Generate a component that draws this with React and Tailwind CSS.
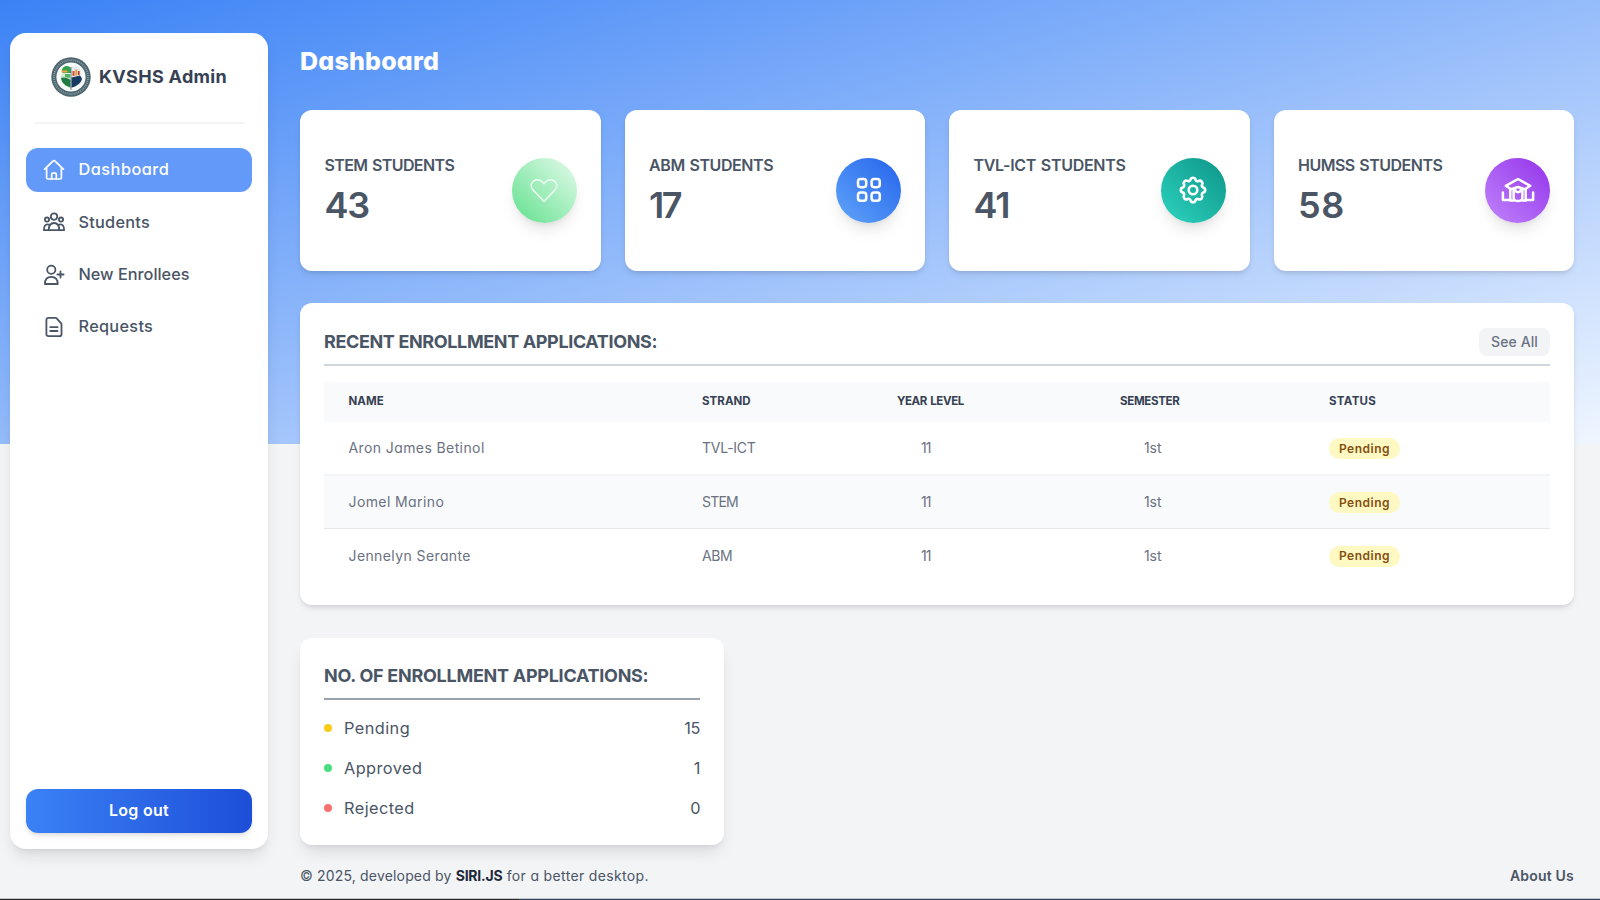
import React from "react";

function HomeIcon() {
  return (
    <svg width="22" height="22" viewBox="0 0 22 22" fill="none" stroke="currentColor" strokeWidth="1.7" strokeLinejoin="round" strokeLinecap="round">
      <path d="M1.6 10.2 10.2 1.9a1.1 1.1 0 0 1 1.6 0l8.6 8.3" />
      <path d="M3.6 8.8v9.9c0 .8.5 1.3 1.3 1.3h12.2c.8 0 1.3-.5 1.3-1.3V8.8" />
      <path d="M8.7 19.8v-4.6c0-.6.4-1 1-1h2.6c.6 0 1 .4 1 1v4.6" />
    </svg>
  );
}

function StudentsIcon() {
  return (
    <svg width="24" height="22" viewBox="0 0 24 22" fill="none" stroke="currentColor" strokeWidth="1.8" strokeLinejoin="round">
      <circle cx="12" cy="5.6" r="3.2" />
      <circle cx="5" cy="8.6" r="2.1" />
      <circle cx="19" cy="8.6" r="2.1" />
      <path d="M6.8 19.2c0-4.6 1.6-7.2 5.2-7.2s5.2 2.6 5.2 7.2z" />
      <path d="M6.8 19.2H1.9c0-3.6.9-5.9 3.6-5.9.9 0 1.6.2 2.2.7M17.2 19.2h4.9c0-3.6-.9-5.9-3.6-5.9-.9 0-1.6.2-2.2.7" />
    </svg>
  );
}

function EnrolleeIcon() {
  return (
    <svg width="22" height="22" viewBox="0 0 22 22" fill="none" stroke="currentColor" strokeWidth="1.8" strokeLinejoin="round" strokeLinecap="round">
      <circle cx="8.3" cy="5.8" r="4.1" />
      <path d="M1.9 20c0-4.4 2-7.1 6.4-7.1s6.4 2.7 6.4 7.1z" />
      <path d="M14.4 10.5h6.2M17.5 7.4v6.2" />
    </svg>
  );
}

function RequestIcon() {
  return (
    <svg width="22" height="22" viewBox="0 0 22 22" fill="none" stroke="currentColor" strokeWidth="1.8" strokeLinejoin="round" strokeLinecap="round">
      <path d="M5.4 1.8h7.1c.4 0 .7.1 1 .4l4.6 5.1c.2.3.4.6.4 1v9.9c0 1.2-.9 2-2 2H5.4c-1.2 0-2-.8-2-2V3.800c0-1.2.8-2 2-2z" />
      <path d="M7.3 11.2h7.2M7.3 15h7.2" />
    </svg>
  );
}

function HeartIcon() {
  return (
    <svg width="28" height="28" viewBox="0 0 28 28" fill="none" stroke="#f0fdf4" strokeWidth="1.5" strokeLinejoin="round">
      <path d="M14 25.200 3.300 14.200C.6 11.400.6 7.800 2.900 5.500c2.600-2.500 6.600-2.400 9 .1L14 7.800l2.100-2.200c2.400-2.500 6.400-2.600 9-.1 2.300 2.300 2.300 5.900-.4 8.700z" />
    </svg>
  );
}

function GridIcon() {
  return (
    <svg width="28" height="28" viewBox="0 0 28 28" fill="none" stroke="#fff" strokeWidth="2.5">
      <rect x="3" y="3" width="8.2" height="8.200" rx="2.6" />
      <rect x="16.6" y="3" width="8.2" height="8.200" rx="2.6" />
      <rect x="3" y="16.6" width="8.2" height="8.200" rx="2.6" />
      <rect x="16.6" y="16.6" width="8.2" height="8.200" rx="2.6" />
    </svg>
  );
}

function GearIcon() {
  return (
    <svg width="28" height="28" viewBox="0 0 28 28" fill="none" stroke="#fff" strokeWidth="2.6" strokeLinejoin="round">
      <path d="M11.500 3.700a2.600 2.600 0 0 1 5 0 2.300 2.300 0 0 0 3.100 1.300 2.600 2.600 0 0 1 3.500 3.500 2.300 2.300 0 0 0 1.200 3 2.600 2.600 0 0 1 0 5 2.300 2.300 0 0 0-1.300 3.100 2.600 2.600 0 0 1-3.500 3.500 2.300 2.300 0 0 0-3 1.200 2.600 2.600 0 0 1-5 0 2.300 2.300 0 0 0-3.100-1.300 2.600 2.600 0 0 1-3.500-3.500 2.300 2.300 0 0 0-1.200-3 2.600 2.600 0 0 1 0-5 2.300 2.300 0 0 0 1.300-3.100 2.600 2.600 0 0 1 3.500-3.500 2.300 2.300 0 0 0 3-1.200z" />
      <circle cx="14" cy="14" r="4.300" />
    </svg>
  );
}

function SchoolIcon() {
  return (
    <svg width="34" height="28" viewBox="0 0 34 28" fill="none" stroke="#fff" strokeWidth="2.5" strokeLinejoin="round" strokeLinecap="round">
      <path d="M17 3 4.800 9.800l5.200 3.400L17 11l7 2.200 5.200-3.400z" />
      <path d="M1.900 16.500v7.500h7M32.100 16.500v7.500h-7" />
      <path d="M9.300 13.500v10M24.700 13.500v10" />
      <path d="M12.600 14v8c0 1.500 2 3 4.400 3s4.400-1.500 4.400-3V14" />
      <path d="M14 13c0 4.200 6 4.200 6 0M9 24.500h4M21 24.500h4" />
    </svg>
  );
}

function Logo() {
  return (
    <svg width="40" height="40" viewBox="0 0 40 40" fill="none">
      <circle cx="20" cy="20" r="19.700" fill="#4d6670" />
      <circle cx="20" cy="20" r="17" stroke="#b4c3c8" strokeWidth="1.800" strokeDasharray="1 1" opacity=".6" />
      <circle cx="20" cy="20" r="14.600" fill="#f8fafa" />
      <path d="M10 20c0-2 1-3.500 3-4l6.500 1v14c-6-2-9.500-6-9.500-11z" fill="#cfe8cf" />
      <path d="M11 12.500c1-3.500 5-4.500 8.500-2l.5 5.500h-8.500z" fill="#34a04b" />
      <path d="M10.500 13.500h6v2h-6z" fill="#f0a63c" />
      <path d="M10 21c3-1.500 6.500 0 9.500 2v7.500c-5-1.500-9-4.500-9.500-9.500z" fill="#1f7a43" />
      <path d="M14 17h5v4l-5-.8z" fill="#55b565" />
      <path d="M20.500 10c3-1.300 6-.8 8.500 1.200l1 8h-9.500z" fill="#e3e9eb" />
      <path d="M21.500 14h2v5h-2z" fill="#d9483b" />
      <path d="M24.200 12.500h2v6h-2z" fill="#f39a32" />
      <path d="M26.900 14h1.700v4h-1.700z" fill="#b03a35" />
      <path d="M20.500 20.500l8.500-2 2 3c-.5 4-4.500 7.500-10.500 9.300z" fill="#173a63" />
      <path d="M20 10v23" stroke="#47606a" strokeWidth=".8" />
    </svg>
  );
}

const NAV = [
  { label: "Dashboard", icon: <HomeIcon />, cls: "bg-[#639af9] text-white tracking-[0.5px]" },
  { label: "Students", icon: <StudentsIcon />, cls: "text-gray-600 tracking-[0.25px]" },
  { label: "New Enrollees", icon: <EnrolleeIcon />, cls: "text-gray-600 tracking-[0px]" },
  { label: "Requests", icon: <RequestIcon />, cls: "text-gray-600 tracking-[0.3px]" },
];

const CARDS = [
  { label: "STEM STUDENTS", value: "43", icon: <HeartIcon />, bg: "from-[#5fe08c] to-[#e6fbec]", t: "tracking-[-0.6px]", v: "tracking-[-1.2px]" },
  { label: "ABM STUDENTS", value: "17", icon: <GridIcon />, bg: "from-[#60a5fa] to-[#2563eb]", t: "tracking-[-0.4px]", v: "tracking-[-2.500px]" },
  { label: "TVL-ICT STUDENTS", value: "41", icon: <GearIcon />, bg: "from-[#2dd4bf] to-[#0d9488]", t: "tracking-[-0.3px]", v: "tracking-[-1px]" },
  { label: "HUMSS STUDENTS", value: "58", icon: <SchoolIcon />, bg: "from-[#c084fc] to-[#9333ea]", t: "tracking-[-0.5px]", v: "tracking-[0.6px]" },
];

const ROWS = [
  { name: "Aron James Betinol", strand: "TVL-ICT", cls: "h-[54px] border-b-2 border-gray-100", st: "tracking-[-0.25px]" },
  { name: "Jomel Marino", strand: "STEM", cls: "h-[53px] border-b border-gray-200 bg-gray-50", st: "tracking-[-0.8px]" },
  { name: "Jennelyn Serante", strand: "ABM", cls: "h-[53px]", st: "tracking-[-0.4px]" },
];

const COUNTS = [
  { label: "Pending", value: 15, dot: "bg-[#facc15]" },
  { label: "Approved", value: 1, dot: "bg-[#4ade80]" },
  { label: "Rejected", value: 0, dot: "bg-[#f87171]" },
];

const COLS = "grid grid-cols-[354px_195px_223px_209px_1fr] items-center";

function Sidebar() {
  return (
    <aside className="ml-[10px] mt-[33px] flex h-[816px] w-[258px] flex-col rounded-2xl bg-white px-4 pb-4 shadow-lg">
      <div className="flex h-[89px] items-center gap-2 pb-px pl-[25px]">
        <Logo />
        <span className="whitespace-nowrap text-lg font-bold tracking-[0.32px] text-gray-700">KVSHS Admin</span>
      </div>
      <div className="mx-2 h-[2px] bg-gray-100" />
      <nav className="mt-6 flex flex-col gap-[8.4px]">
        {NAV.map((n) => (
          <a key={n.label} className={"flex h-11 items-center gap-[11px] rounded-xl pl-4 text-[16.3px] font-medium " + n.cls}>
            <span className="flex w-6 shrink-0 justify-center">{n.icon}</span>
            <span className="ml-[1.5px] pb-px">{n.label}</span>
          </a>
        ))}
      </nav>
      <button className="mt-auto h-11 rounded-xl bg-[linear-gradient(to_right,#3b82f6,#1d4ed8)] pb-0.5 text-base font-semibold tracking-[0.3px] text-white shadow-md">Log out</button>
    </aside>
  );
}

export default function App() {
  return (
    <div className="h-[900px] w-[1600px] overflow-hidden bg-[#f3f4f6] font-['Inter',sans-serif] [font-feature-settings:'cv11']">
      <div className="flex h-[898px] items-start bg-[linear-gradient(to_bottom_right,#3b82f6,#eff6ff)] bg-[length:1600px_444px] bg-no-repeat">
        <Sidebar />
        <main className="ml-8 w-[1274px]">
          <h1 className="mt-[45px] h-8 text-[25px] font-extrabold leading-8 tracking-[0.2px] text-white">Dashboard</h1>

          <section className="mt-[33px] grid grid-cols-4 gap-6">
            {CARDS.map((c) => (
              <div key={c.label} className="flex h-[161px] items-center justify-between rounded-xl bg-white pl-[24.5px] pr-6 shadow-md">
                <div className="pb-[3px] text-gray-600">
                  <p className={"whitespace-nowrap text-base font-semibold leading-6 [word-spacing:1px] " + c.t}>{c.label}</p>
                  <p className={"mt-2 text-4xl font-semibold leading-[40px] " + c.v}>{c.value}</p>
                </div>
                <div className={"mb-px flex size-[65px] shrink-0 items-center justify-center rounded-full bg-linear-to-tr/srgb shadow-lg " + c.bg}>{c.icon}</div>
              </div>
            ))}
          </section>

          <section className="mt-8 h-[302px] rounded-xl bg-white px-6 pt-[25px] shadow-md">
            <div className="flex h-[38px] items-start justify-between border-b-2 border-gray-300">
              <h2 className="text-lg font-bold leading-7 tracking-[-0.37px] text-gray-600">RECENT ENROLLMENT APPLICATIONS:</h2>
              <button className="h-7 rounded-lg bg-gray-100 px-3 text-sm font-medium tracking-[0.1px] text-gray-500">See All</button>
            </div>
            <div className="mt-4">
              <div className={COLS + " h-10 bg-gray-50 text-[11.5px] font-bold text-gray-700"}>
                <span className="pl-[24.5px] tracking-[0.1px]">NAME</span>
                <span className="pl-6 tracking-[0.05px]">STRAND</span>
                <span className="pl-6 tracking-[-0.4px] [word-spacing:1px]">YEAR LEVEL</span>
                <span className="pl-6 tracking-[-0.3px]">SEMESTER</span>
                <span className="pl-6 tracking-[0.3px]">STATUS</span>
              </div>
              {ROWS.map((r) => (
                <div key={r.name} className={COLS + " text-sm text-gray-500 " + r.cls}>
                  <span className="pl-[24.5px] tracking-[0.4px]">{r.name}</span>
                  <span className={"pl-6 " + r.st}>{r.strand}</span>
                  <span className="pl-12 tracking-[-1px]">11</span>
                  <span className="pl-12 tracking-[-0.1px]">1st</span>
                  <span className="flex pl-6">
                    <span className="mt-px flex h-[21px] w-[71px] items-center justify-center rounded-full bg-[#fef9c3] text-xs font-semibold tracking-[0.5px] text-[#854d0e]">Pending</span>
                  </span>
                </div>
              ))}
            </div>
          </section>

          <section className="mt-[33px] h-[207px] w-[424px] rounded-xl bg-white px-6 pt-6 shadow-lg">
            <h2 className="h-[38px] border-b-2 border-gray-400 text-lg font-bold leading-7 tracking-[-0.27px] text-gray-600">NO. OF ENROLLMENT APPLICATIONS:</h2>
            <ul className="mt-[8px] text-[16.3px] text-gray-600">
              {COUNTS.map((c) => (
                <li key={c.label} className="flex h-[40.2px] items-center">
                  <span className={"size-2 rounded-full " + c.dot} />
                  <span className="ml-3 tracking-[0.45px]">{c.label}</span>
                  <span className="ml-auto tracking-[-0.4px]">{c.value}</span>
                </li>
              ))}
            </ul>
          </section>

          <footer className="mt-[21px] flex h-5 items-center justify-between whitespace-nowrap text-sm text-gray-600">
            <p className="tracking-[0.17px]">
              © 2025, developed by <b className="font-bold tracking-[-0.2px] text-gray-800">SIRI.JS</b> <span className="tracking-[0.35px]">for a better desktop.</span>
            </p>
            <a className="font-semibold tracking-[0.2px]">About Us</a>
          </footer>
        </main>
      </div>
      <div className="h-px bg-[#c4c6ca]" />
      <div className="h-px bg-[linear-gradient(to_right,#262626_519px,#32445f_519px)]" />
    </div>
  );
}
